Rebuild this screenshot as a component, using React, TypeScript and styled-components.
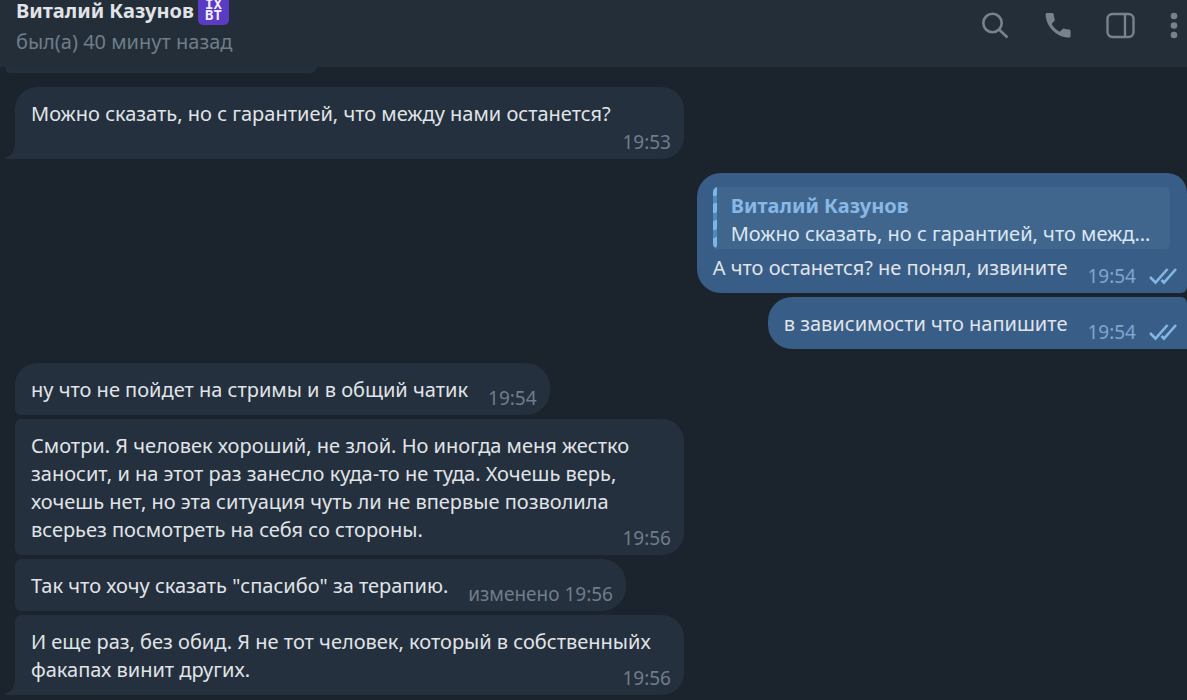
import React from "react";
import styled, { createGlobalStyle, css } from "styled-components";

const GlobalStyle = createGlobalStyle`
  *, *::before, *::after { box-sizing: border-box; }
  body {
    margin: 0;
    background: #1b232d;
    font-family: "Noto Sans", "Open Sans", sans-serif;
    font-size: 20px;
    line-height: 28px;
    color: #e0e4e8;
  }
`;

const Page = styled.div`
  min-height: 100vh;
  overflow: hidden;
  display: flex;
  flex-direction: column;
`;

const Header = styled.header`
  height: 67px;
  flex: none;
  display: flex;
  justify-content: space-between;
  padding: 0 8px 0 16px;
  background: #242e38;
`;

const NameRow = styled.div`
  display: flex;
  align-items: flex-start;
  gap: 4px;
  height: 28px;
`;

const Name = styled.h1`
  margin: 0;
  font-size: 20px;
  font-weight: 700;
  line-height: 22px;
  white-space: nowrap;
`;

const Badge = styled.span`
  width: 31px;
  height: 31px;
  margin-top: -6px;
  padding-top: 5px;
  border-radius: 5px;
  background: #5a3cc4;
  color: #f3effd;
  font: 700 14px/11px "DejaVu Sans Mono", monospace;
  text-align: center;
`;

const Status = styled.p`
  margin: 0;
  font-size: 20px;
  line-height: 28px;
  color: #6f7d8a;
`;

const Actions = styled.nav`
  display: flex;
  align-items: flex-start;
  gap: 33px;
  padding-top: 11px;
`;

const IconButton = styled.button`
  display: flex;
  padding: 0;
  border: 0;
  background: none;
  color: #77828c;
  cursor: pointer;
`;

const Messages = styled.main`
  display: flex;
  flex-direction: column;
  align-items: flex-start;
  gap: 14px;
  padding-left: 15px;
`;

const Group = styled.section<{ $own?: boolean }>`
  width: 100%;
  display: flex;
  flex-direction: column;
  align-items: ${(p) => (p.$own ? "flex-end" : "flex-start")};
  gap: 4px;
`;

const tail = css`
  border-bottom-left-radius: 0;
  &::before {
    content: "";
    position: absolute;
    left: -9px;
    bottom: 0;
    width: 9px;
    height: 16px;
    background: radial-gradient(ellipse 9px 14px at 0 0, transparent 98%, #24303d 100%);
  }
`;

const Bubble = styled.article<{ $own?: boolean; $wide?: boolean; $tail?: boolean; $radius: string }>`
  position: relative;
  display: grid;
  width: ${(p) => (p.$wide ? "100%" : "auto")};
  max-width: 669px;
  padding: ${(p) => (p.$own ? "13px 10px 11px 16px" : "13px 13px 11px 16px")};
  border-radius: ${(p) => p.$radius};
  background: ${(p) => (p.$own ? "#385e88" : "#24303d")};
  ${(p) => p.$tail && tail}
`;

const Remnant = styled.div`
  position: relative;
  width: 302px;
  height: 6px;
  border-radius: 0 0 8px 0;
  background: #24303d;
  ${tail}
  &::before { height: 6px; background: #24303d; border-bottom-left-radius: 4px; }
`;

const Text = styled.p<{ $meta: "beside" | "below" | "over" }>`
  grid-area: 1 / 1;
  margin: 0;
  padding-bottom: ${(p) => (p.$meta === "below" ? "20px" : "0")};
`;

const TextRow = styled.div<{ $gap?: boolean }>`
  display: grid;
  grid-template-columns: ${(p) => (p.$gap ? "auto auto" : "1fr")};
  column-gap: 20px;
`;

const Meta = styled.footer<{ $own?: boolean; $over?: boolean }>`
  grid-area: ${(p) => (p.$over ? "1 / 1" : "1 / 2")};
  justify-self: end;
  align-self: end;
  display: flex;
  align-items: center;
  gap: 13px;
  margin-bottom: -8px;
  font-size: 19px;
  white-space: nowrap;
  color: ${(p) => (p.$own ? "#7fa6cd" : "#6f7d8b")};
`;

const Quote = styled.blockquote`
  width: 0;
  min-width: calc(100% - 7px);
  margin: 1px 0 5px;
  padding: 5px 16px 1px 18px;
  border-radius: 5px;
  background:
    repeating-linear-gradient(160deg, #7ab6e6 0 9px, #5288ba 9px 16px) 0 0 / 4px 100% no-repeat,
    #40668d;
`;

const QuoteLine = styled.p<{ $author?: boolean }>`
  margin: 0;
  overflow: hidden;
  text-overflow: ellipsis;
  white-space: nowrap;
  font-weight: ${(p) => (p.$author ? 700 : 400)};
  color: ${(p) => (p.$author ? "#88b8e6" : "#dce7f2")};
`;

const Checks = () => (
  <svg width="28" height="18" viewBox="0 0 28 18" fill="none" stroke="#83b6e4" strokeWidth="2.6" aria-label="Прочитано">
    <path d="M1 10l5.500 5.500L18.500 2M12.500 13l2.500 2.500L27 2" />
  </svg>
);

type MessageProps = {
  text: string;
  time: string;
  radius: string;
  own?: boolean;
  tail?: boolean;
  meta?: "beside" | "below" | "over";
  children?: React.ReactNode;
};

function Message({ text, time, radius, own, tail: hasTail, meta = "beside", children }: MessageProps) {
  const over = meta !== "beside";
  return (
    <Bubble $own={own} $wide={over} $tail={hasTail} $radius={radius}>
      {children}
      <TextRow $gap={!over}>
        <Text $meta={meta}>{text}</Text>
        <Meta $own={own} $over={over}>
          <span>{time}</span>
          {own && <Checks />}
        </Meta>
      </TextRow>
    </Bubble>
  );
}

export default function App() {
  return (
    <Page>
      <GlobalStyle />
      <Header>
        <div>
          <NameRow>
            <Name>Виталий Казунов</Name>
            <Badge>IX<br />BT</Badge>
          </NameRow>
          <Status>был(а) 40 минут назад</Status>
        </div>
        <Actions>
          <IconButton aria-label="Поиск">
            <svg width="30" height="30" viewBox="0 0 30 30" fill="none" stroke="currentColor" strokeWidth="2.6">
              <circle cx="12.5" cy="12" r="9.2" />
              <path d="M19 18.5l8.5 8" />
            </svg>
          </IconButton>
          <IconButton aria-label="Позвонить">
            <svg width="30" height="30" viewBox="0 0 30 30" fill="currentColor">
              <path d="M4 2h5c1 0 1.600.500 1.700 1.500.2 1.900.5 3.300 1 4.800.2.700 0 1.200-.4 1.700l-2.700 3.100c2 3.500 4.600 5.900 8.100 7.700l3.100-2.800c.5-.4 1-.5 1.600-.3 1.500.5 3 .8 4.700.9 1 .1 1.500.7 1.500 1.600v4.800c0 1-.6 1.600-1.600 1.600C13.500 26.500 3 15.500 2.600 3.500 2.600 2.600 3.100 2 4 2z" />
            </svg>
          </IconButton>
          <IconButton aria-label="Панель">
            <svg width="30" height="30" viewBox="0 0 30 30" fill="none" stroke="currentColor" strokeWidth="2.4">
              <rect x="1.500" y="3" width="26" height="23" rx="5" />
              <path d="M19 3v23" />
            </svg>
          </IconButton>
          <IconButton aria-label="Меню">
            <svg width="10" height="30" viewBox="0 0 10 30" fill="currentColor">
              <circle cx="5" cy="5" r="3.300" />
              <circle cx="5" cy="14.500" r="3.300" />
              <circle cx="5" cy="24" r="3.300" />
            </svg>
          </IconButton>
        </Actions>
      </Header>
      <Messages>
        <Remnant />
        <Group>
          <Message tail meta="below" radius="22px 22px 22px 0" time="19:53" text="Можно сказать, но с гарантией, что между нами останется?" />
        </Group>
        <Group $own>
          <Message own radius="24px 20px 6px 24px" time="19:54" text="А что останется? не понял, извините">
            <Quote>
              <QuoteLine $author>Виталий Казунов</QuoteLine>
              <QuoteLine>Можно сказать, но с гарантией, что между нами останется?</QuoteLine>
            </Quote>
          </Message>
          <Message own radius="24px 6px 0 24px" time="19:54" text="в зависимости что напишите" />
        </Group>
        <Group>
          <Message radius="22px 24px 24px 6px" time="19:54" text="ну что не пойдет на стримы и в общий чатик" />
          <Message
            meta="over"
            radius="6px 22px 22px 6px"
            time="19:56"
            text="Смотри. Я человек хороший, не злой. Но иногда меня жестко заносит, и на этот раз занесло куда-то не туда. Хочешь верь, хочешь нет, но эта ситуация чуть ли не впервые позволила всерьез посмотреть на себя со стороны."
          />
          <Message radius="6px 24px 24px 6px" time="изменено 19:56" text={'Так что хочу сказать "спасибо" за терапию.'} />
          <Message
            tail
            meta="over"
            radius="6px 22px 22px 0"
            time="19:56"
            text="И еще раз, без обид. Я не тот человек, который в собственныйх факапах винит других."
          />
        </Group>
      </Messages>
    </Page>
  );
}
